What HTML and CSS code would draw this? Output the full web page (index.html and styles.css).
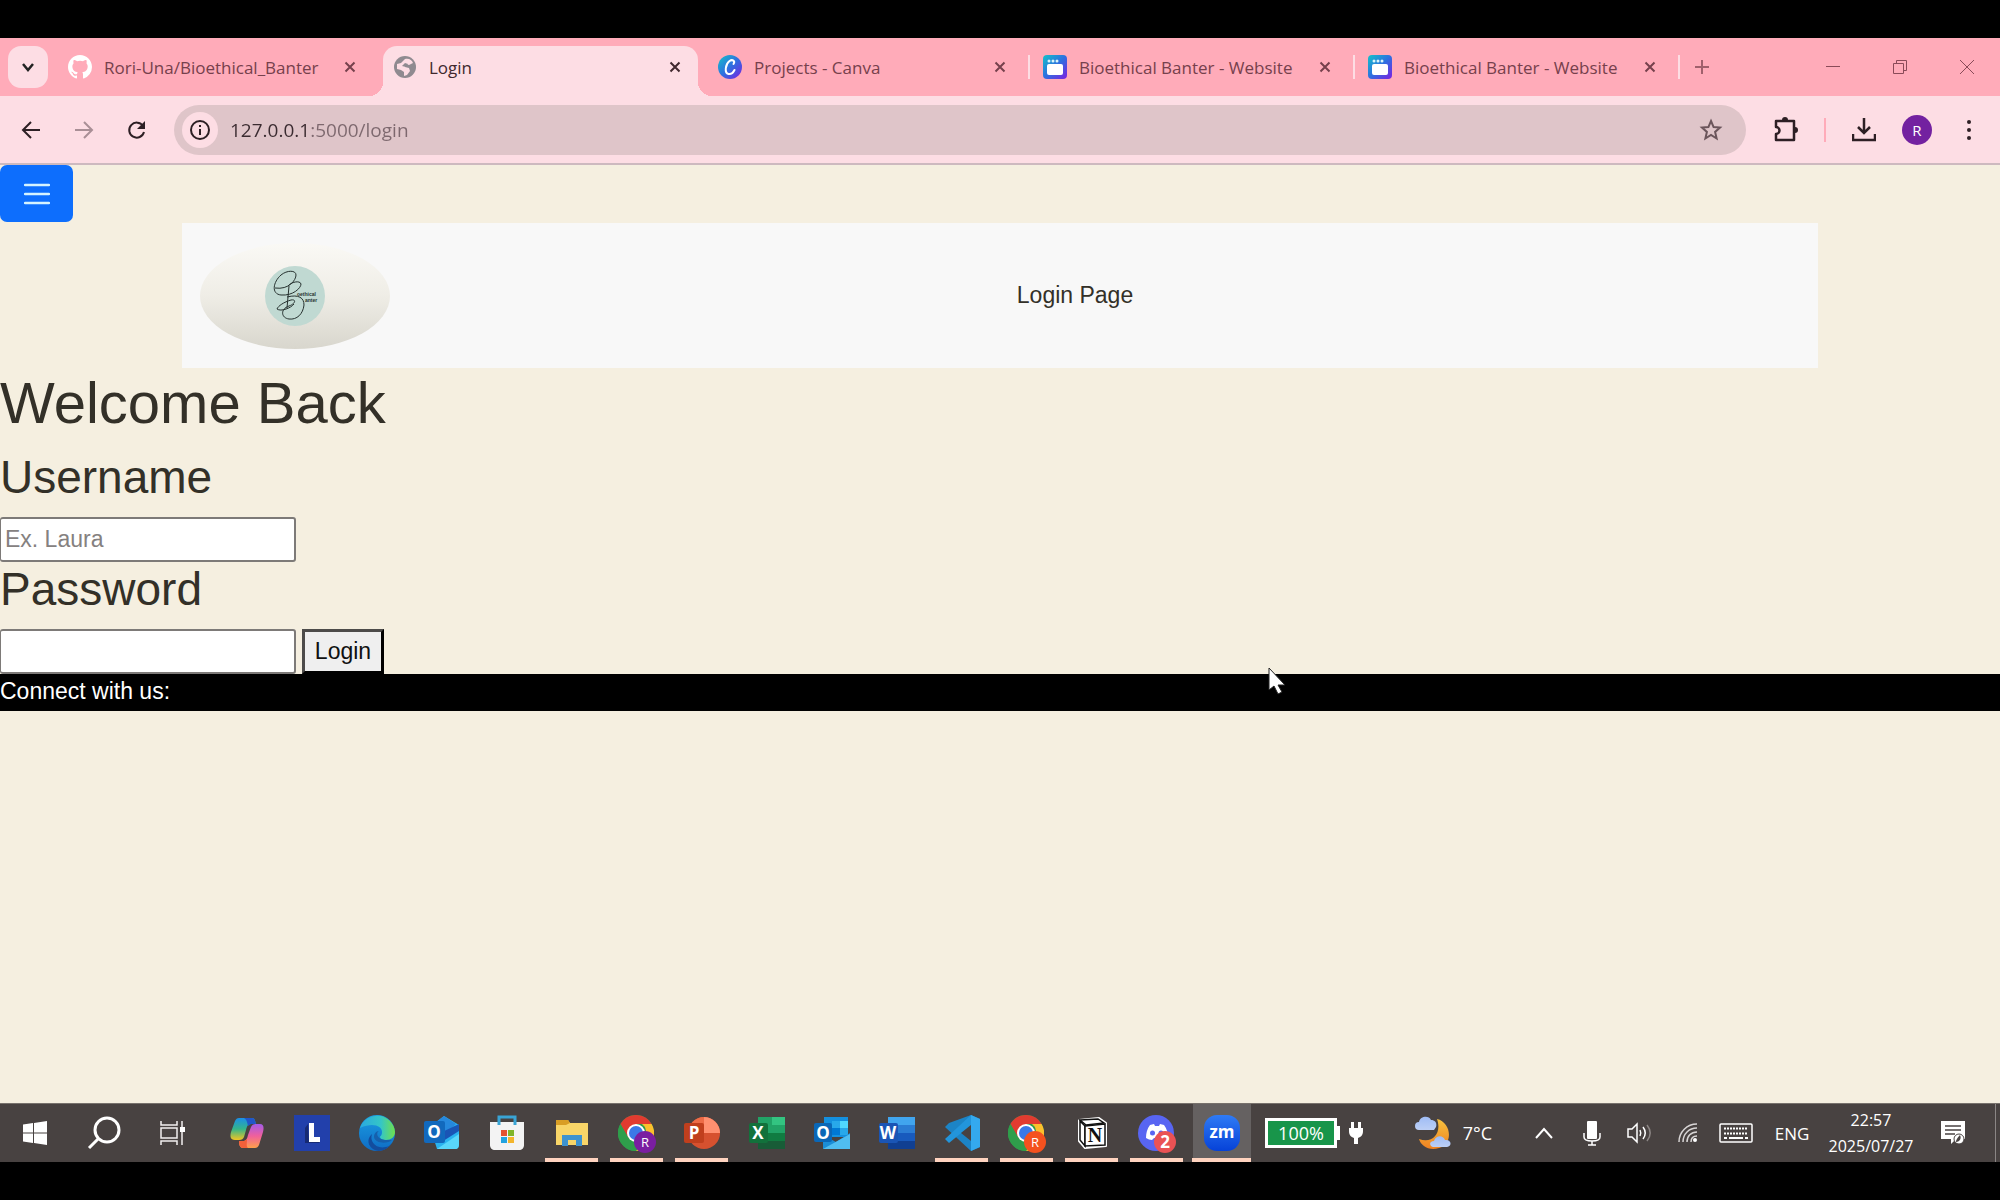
FILE: index.html
```html
<!DOCTYPE html>
<html lang="en">
<head>
  <meta charset="UTF-8" />
  <title>Login</title>
  <link rel="stylesheet" href="styles.css">
</head>
<body>
  <!-- shared shapes and gradients -->
  <svg class="defs" aria-hidden="true">
    <defs>
      <linearGradient id="canva" x1="0" y1="0" x2="1" y2="1"><stop offset="0" stop-color="#12c3c9"/><stop offset=".5" stop-color="#2f6fe0"/><stop offset="1" stop-color="#7d1fe0"/></linearGradient>
      <linearGradient id="copilotA" x1="0" y1="0" x2="0" y2="1"><stop offset="0" stop-color="#1b8fe8"/><stop offset=".5" stop-color="#34b58a"/><stop offset="1" stop-color="#f2c522"/></linearGradient>
      <linearGradient id="copilotB" x1="0" y1="0" x2="0" y2="1"><stop offset="0" stop-color="#a45be8"/><stop offset=".5" stop-color="#f0609c"/><stop offset="1" stop-color="#ffa04a"/></linearGradient>
      <linearGradient id="edgeA" x1="0" y1="0" x2="1" y2="0"><stop offset="0" stop-color="#2aa9e0"/><stop offset=".6" stop-color="#35c6c6"/><stop offset="1" stop-color="#6fe04c"/></linearGradient>
      <linearGradient id="edgeB" x1="0" y1="0" x2="0" y2="1"><stop offset="0" stop-color="#1b9de2"/><stop offset="1" stop-color="#0f6cc4"/></linearGradient>
      <linearGradient id="zoomBg" x1="0" y1="0" x2="0" y2="1"><stop offset="0" stop-color="#2f7bf5"/><stop offset="1" stop-color="#0642d8"/></linearGradient>
      <linearGradient id="moon" x1="0" y1="0" x2="0" y2="1"><stop offset="0" stop-color="#f7c23e"/><stop offset="1" stop-color="#ee8122"/></linearGradient>
      <linearGradient id="cloud" x1="0" y1="0" x2="0" y2="1"><stop offset="0" stop-color="#9fbcf5"/><stop offset="1" stop-color="#bccff5"/></linearGradient>
      <symbol id="x" viewBox="0 0 12 12"><path d="M1.500 1.500l9 9M10.500 1.500l-9 9" stroke="currentColor" stroke-width="2" fill="none"/></symbol>
      <symbol id="site" viewBox="0 0 24 24"><rect width="24" height="24" rx="4" fill="url(#canva)"/><circle cx="6" cy="6" r="1.500" fill="#d9f4fa"/><circle cx="10" cy="6" r="1.500" fill="#d9f4fa"/><circle cx="14" cy="6" r="1.500" fill="#d9f4fa"/><rect x="4" y="9" width="16" height="11" rx="2" fill="#fff"/></symbol>
      <symbol id="chrome" viewBox="0 0 36 36">
        <circle cx="18" cy="18" r="18" fill="#2f9e4b"/>
        <path d="M2.400 9A18 18 0 0 1 33.600 9H18a9 9 0 0 0-8 5z" fill="#e13b30"/>
        <path d="M33.600 9A18 18 0 0 1 18 36l8-14a9 9 0 0 0-2-13z" fill="#fbc02d"/>
        <path d="M2.400 9l7.800 13.500L18 18V9z" fill="#e13b30"/>
        <path d="M2.400 9A18 18 0 0 0 18 36l7-12H11z" fill="#2f9e4b"/>
        <circle cx="18" cy="18" r="9" fill="#fff"/><circle cx="18" cy="18" r="7" fill="#3b78e7"/>
      </symbol>
    </defs>
  </svg>

  <div class="tab-strip">
    <button class="tab-search" aria-label="Search tabs"><svg width="14" height="14" viewBox="0 0 14 14"><path d="M2 4l5 6 5-6" fill="none" stroke="currentColor" stroke-width="2.500"/></svg></button>
    <div class="tab">
      <svg class="tab-icon" viewBox="0 0 16 16"><path fill="#fff" d="M8 0C3.580 0 0 3.580 0 8c0 3.540 2.290 6.530 5.470 7.590.4.070.55-.17.55-.38 0-.19-.01-.82-.01-1.490-2.010.37-2.530-.49-2.690-.94-.09-.23-.48-.94-.82-1.130-.28-.15-.68-.52-.01-.53.63-.01 1.080.58 1.230.82.72 1.210 1.870.87 2.330.66.07-.52.28-.87.51-1.070-1.780-.2-3.640-.89-3.640-3.950 0-.87.31-1.590.82-2.150-.08-.2-.36-1.020.08-2.120 0 0 .67-.21 2.200.82a7.600 7.600 0 0 1 4 0c1.530-1.040 2.200-.82 2.200-.82.44 1.100.16 1.920.08 2.120.51.56.82 1.270.82 2.150 0 3.070-1.870 3.750-3.650 3.950.29.25.54.73.54 1.480 0 1.070-.01 1.930-.01 2.200 0 .21.15.46.55.38A8 8 0 0 0 16 8c0-4.420-3.580-8-8-8z"/></svg>
      <a class="tab-title" href="#">Rori-Una/Bioethical_Banter</a>
      <button class="tab-close" aria-label="Close tab"><svg width="12" height="12"><use href="#x"/></svg></button>
    </div>
    <div class="tab active">
      <svg class="tab-icon" viewBox="0 0 24 24"><circle cx="12" cy="12" r="11" fill="#8f8a90"/><path d="M12 4c4-1 7 1 8 4l-4 2-3-1-1 3 4 1 1 3-3 4-3 1v-4l-3-2-4-1V9l4-1 2-2z" fill="#fddde4"/><path d="M12 8l3 1-2 3-4-1z" fill="#8f8a90"/></svg>
      <a class="tab-title" href="#">Login</a>
      <button class="tab-close" aria-label="Close tab"><svg width="12" height="12"><use href="#x"/></svg></button>
    </div>
    <div class="tab">
      <svg class="tab-icon" viewBox="0 0 24 24"><circle cx="12" cy="12" r="12" fill="url(#canva)"/><path d="M15.500 9c2-3-1-5-4-3-4 3-5.500 12-1 13 3 .5 5-2 6-4" fill="none" stroke="#fff" stroke-width="2" stroke-linecap="round"/></svg>
      <a class="tab-title" href="#">Projects - Canva</a>
      <button class="tab-close" aria-label="Close tab"><svg width="12" height="12"><use href="#x"/></svg></button>
    </div>
    <div class="tab divided">
      <svg class="tab-icon"><use href="#site"/></svg>
      <a class="tab-title" href="#">Bioethical Banter - Website</a>
      <button class="tab-close" aria-label="Close tab"><svg width="12" height="12"><use href="#x"/></svg></button>
    </div>
    <div class="tab divided">
      <svg class="tab-icon"><use href="#site"/></svg>
      <a class="tab-title" href="#">Bioethical Banter - Website</a>
      <button class="tab-close" aria-label="Close tab"><svg width="12" height="12"><use href="#x"/></svg></button>
    </div>
    <div class="new-tab divided"><button aria-label="New tab"><svg width="16" height="16" viewBox="0 0 16 16"><path d="M8 1v14M1 8h14" stroke="currentColor" stroke-width="2"/></svg></button></div>
    <div class="window-buttons">
      <button aria-label="Minimize"><svg width="16" height="16" viewBox="0 0 16 16"><path d="M1 7.500h14" stroke="currentColor"/></svg></button>
      <button aria-label="Restore"><svg width="16" height="16" viewBox="0 0 16 16"><path d="M1.500 4.500h10v10h-10zM4.500 4V1.500h10v10H12" fill="none" stroke="currentColor"/></svg></button>
      <button aria-label="Close"><svg width="16" height="16" viewBox="0 0 16 16"><path d="M1 1l14 14M15 1L1 15" stroke="currentColor"/></svg></button>
    </div>
  </div>

  <div class="toolbar">
    <div class="nav-buttons">
      <button aria-label="Back"><svg width="20" height="20" viewBox="0 0 20 20"><path d="M19 10H3M10 2l-8 8 8 8" fill="none" stroke="currentColor" stroke-width="2"/></svg></button>
      <button class="disabled" aria-label="Forward"><svg width="20" height="20" viewBox="0 0 20 20"><path d="M1 10h16M10 2l8 8-8 8" fill="none" stroke="currentColor" stroke-width="2"/></svg></button>
      <button aria-label="Reload"><svg width="20" height="20" viewBox="0 0 20 20"><path d="M16 6A7.500 7.500 0 1 0 17 12" fill="none" stroke="currentColor" stroke-width="2"/><path d="M18 1v8h-8z" fill="currentColor"/></svg></button>
    </div>
    <div class="omnibox">
      <button class="site-info" aria-label="Site information"><svg width="20" height="20" viewBox="0 0 20 20"><circle cx="10" cy="10" r="9" fill="none" stroke="currentColor" stroke-width="2"/><path d="M10 9v6M10 5v2" stroke="currentColor" stroke-width="2"/></svg></button>
      <input class="address" type="text" value="127.0.0.1:5000/login" aria-label="Address">
      <button class="star" aria-label="Bookmark"><svg width="24" height="24" viewBox="0 0 24 24"><path d="M12 3l2.600 6.100 6.400.5-4.900 4.300 1.500 6.600L12 17l-5.600 3.500 1.500-6.600L3 9.600l6.400-.5z" fill="none" stroke="currentColor" stroke-width="2"/></svg></button>
    </div>
    <div class="actions">
      <button aria-label="Extensions"><svg width="26" height="26" viewBox="0 0 26 26"><path d="M3 4h18v19H3v-6a3.500 3.500 0 0 0 0-7z" fill="none" stroke="currentColor" stroke-width="2.500" stroke-linejoin="round"/><path d="M9 3a3 3 0 0 1 6 0zM22 10a3 3 0 0 1 0 6z" fill="currentColor"/></svg></button>
      <span class="bar"></span>
      <button aria-label="Downloads"><svg width="24" height="26" viewBox="0 0 24 26"><path d="M12 1v14M6 10l6 6 6-6M1 17v6h22v-6" fill="none" stroke="currentColor" stroke-width="2.500"/></svg></button>
      <button class="avatar" aria-label="Profile">R</button>
      <button class="dots" aria-label="Menu"><svg width="6" height="22" viewBox="0 0 6 22"><g fill="currentColor"><circle cx="3" cy="3" r="2"/><circle cx="3" cy="11" r="2"/><circle cx="3" cy="19" r="2"/></g></svg></button>
    </div>
  </div>

  <main class="page">
    <button class="menu-button" aria-label="Menu"><svg width="26" height="26" viewBox="0 0 26 26"><path d="M1 4h24M1 13h24M1 22h24" stroke="currentColor" stroke-width="2.500" stroke-linecap="round"/></svg></button>
    <header class="header">
      <div class="logo">
        <svg width="60" height="60" viewBox="0 0 60 60">
          <circle cx="30" cy="30" r="30" fill="#c0d9d2"/>
          <path d="M10 22C24 24 31 14 31 9C31 4 22 4 16 9C8 16 6 28 16 29C28 30 36 22 36 18C35 14 26 16 23 20M24 20L22 42M22 31C34 28 39 32 39 39C38 48 32 54 24 53C16 52 15 43 24 40C30 38 32 33 26 34C19 36 13 40 12 43C16 46 26 42 29 38" fill="none" stroke="#26312f" stroke-width="1"/>
          <text x="32" y="30" class="logo-text">oethical</text>
          <text x="40" y="36" class="logo-text">anter</text>
        </svg>
      </div>
      <p class="page-name">Login Page</p>
    </header>
    <form class="login-form">
      <h1>Welcome Back</h1>
      <h2><label for="username">Username</label></h2>
      <input type="text" id="username" placeholder="Ex. Laura">
      <h2><label for="password">Password</label></h2>
      <div class="row">
        <input type="password" id="password">
        <button type="button">Login</button>
      </div>
    </form>
    <footer class="footer">Connect with us:
      <svg class="cursor" width="20" height="30" viewBox="0 0 20 30"><path d="M1 1v22l5-4 4 8 4-2-4-7h7z" fill="#fff" stroke="#222" stroke-width="1"/></svg>
    </footer>
  </main>

  <div class="taskbar">
    <div class="system">
      <button aria-label="Start"><svg width="24" height="24" viewBox="0 0 24 24" fill="#fff"><path d="M0 3.500l10-1.500v9.500H0zM11 2l13-2v11.500H11zM0 12.500h10V22L0 20.500zM11 12.500h13V24l-13-2z"/></svg></button>
      <button aria-label="Search"><svg width="34" height="34" viewBox="0 0 34 34"><circle cx="20" cy="14" r="12" fill="none" stroke="#fff" stroke-width="3"/><path d="M12 22L2 32" stroke="#fff" stroke-width="3"/></svg></button>
      <button aria-label="Task view"><svg width="26" height="24" viewBox="0 0 26 24" fill="none" stroke="#f2f0f0" stroke-width="1.500"><path d="M1 0v4h16V0M1 7h16v10H1zM1 24v-4h16v4M22 0v24"/><path d="M20 6h5v5h-5z" fill="#fff" stroke="none"/></svg></button>
    </div>
    <div class="apps">
      <button aria-label="Copilot"><svg width="36" height="36" viewBox="0 0 36 36"><path d="M10 3h13c3 0 3 3 4 6h-5c-3 0-4 2-5 6l-2 7c-1 2-2 3-5 3H6c-5 0-5-4-4-8l4-11c1-2 2-3 4-3z" fill="url(#copilotA)"/><path d="M15 3h8c3 0 3 3 4 6h-5l-3 2c-1-4-1-6-4-8z" fill="#2156c9"/><path d="M26 33H14c-3 0-4-3-4-7h4c3 0 4-2 5-6l3-8c1-2 2-3 5-3h4c4 0 4 4 3 8l-4 13c-1 2-2 3-4 3z" fill="url(#copilotB)"/><path d="M10 26h5l3-2c0 5-1 7 1 9h-5c-3 0-4-3-4-7z" fill="#f2603a"/></svg></button>
      <button aria-label="L"><svg width="36" height="36" viewBox="0 0 36 36"><rect width="36" height="36" fill="#2240ab"/><path d="M15 8v19h11v-5h-6V8z" fill="#fff"/><path d="M14 9l-3 4v15h14l1-1H15z" fill="#172a72"/></svg></button>
      <button aria-label="Edge"><svg width="36" height="36" viewBox="0 0 36 36"><circle cx="18" cy="18" r="18" fill="url(#edgeB)"/><path d="M1 13A18 18 0 0 1 36 17c0 5-4 8-9 8-4 0-6-1-6-3 0-1 2-1 2-5 0-6-9-10-22-4z" fill="url(#edgeA)"/><path d="M13 19c-3 8 5 17 17 12l3-3a18 18 0 0 1-13 8c-10-1-14-11-7-17z" fill="#134d9e"/><path d="M20 16c-3 1-3 8 6 9h7c-4 4-17 4-18-3 0-3 2-6 5-6z" fill="#1660ad"/></svg></button>
      <button aria-label="Outlook"><svg width="36" height="36" viewBox="0 0 36 36"><path d="M6 12L20 1l15 9v19c0 3-1 5-4 5H13z" fill="#2ab3ef"/><path d="M12 7l8-6 12 8-12 11z" fill="#2688dd"/><path d="M16 18l19-9v7L16 28z" fill="#1a55b5"/><path d="M13 34l22-15v10c0 3-1 5-4 5z" fill="#59d7fa"/><rect y="6" width="21" height="22" rx="2" fill="#1269bd"/><text x="10" y="23" class="badge-letter">O</text></svg></button>
      <button aria-label="Store"><svg width="36" height="36" viewBox="0 0 36 36"><path d="M10 10V2h16v8" fill="none" stroke="#39a4d5" stroke-width="3"/><path d="M1 7h34v23c0 3-2 5-5 5H6c-3 0-5-2-5-5z" fill="#f3f3f3"/><path d="M10 10V7M26 10V7" stroke="#39a4d5" stroke-width="3"/><path d="M12 15h6v6h-6z" fill="#e4512f"/><path d="M19 15h6v6h-6z" fill="#7fb52a"/><path d="M12 22h6v6h-6z" fill="#22a3df"/><path d="M19 22h6v6h-6z" fill="#f3b52c"/></svg></button>
      <button class="open" aria-label="File Explorer"><svg width="36" height="36" viewBox="0 0 36 36"><path d="M2 5h12l2 3h18v22H2z" fill="#f8d568"/><path d="M2 5h12l2 3-4 2H2z" fill="#d99e25"/><path d="M8 20h20v11h-6v-6h-8v6H8z" fill="#3e93cf"/></svg></button>
      <button class="open" aria-label="Chrome"><svg width="40" height="40" viewBox="0 0 40 40"><use href="#chrome" x="1" y="2" width="36" height="36"/><circle cx="28" cy="29" r="11" fill="#7a1ea1"/><text x="28" y="34" class="badge-small">R</text></svg></button>
      <button class="open" aria-label="PowerPoint"><svg width="36" height="36" viewBox="0 0 36 36"><circle cx="20" cy="18" r="16" fill="#d6512f"/><path d="M20 2a16 16 0 0 1 16 16H20z" fill="#ff9070"/><path d="M20 2A16 16 0 0 0 4 18h16z" fill="#ed6c47"/><rect y="8" width="20" height="20" rx="2" fill="#c03f1d"/><text x="10" y="24" class="badge-letter">P</text></svg></button>
      <button aria-label="Excel"><svg width="36" height="36" viewBox="0 0 36 36"><path d="M9 2h27v32H9z" fill="#185c37"/><path d="M9 2h14v16H9z" fill="#21a366"/><path d="M23 2h13v8H23z" fill="#33c481"/><path d="M23 10h13v8H23z" fill="#21a366"/><path d="M9 18h27v8H9z" fill="#107c41"/><rect y="8" width="19" height="20" rx="2" fill="#12713b"/><text x="9" y="24" class="badge-letter">X</text></svg></button>
      <button aria-label="Outlook classic"><svg width="36" height="36" viewBox="0 0 36 36"><path d="M10 2h24v20H10z" fill="#1490df"/><path d="M18 6h8v7h-8z" fill="#28a8ea"/><path d="M26 6h8v7h-8z" fill="#50d9ff"/><path d="M18 13h8v7h-8z" fill="#0078d4"/><path d="M26 13h8v7h-8z" fill="#28a8ea"/><path d="M9 20l13 7 14-9v16H9z" fill="#1b8dd6"/><path d="M9 34l27-15v15z" fill="#50bdf0"/><rect y="8" width="18" height="19" rx="2" fill="#0a67b7"/><text x="9" y="24" class="badge-letter">O</text></svg></button>
      <button aria-label="Word"><svg width="36" height="36" viewBox="0 0 36 36"><path d="M9 2h27v8H9z" fill="#41a5ee"/><path d="M9 10h27v8H9z" fill="#2b7cd3"/><path d="M9 18h27v8H9z" fill="#185abd"/><path d="M9 26h27v8H9z" fill="#103f91"/><rect y="8" width="19" height="20" rx="2" fill="#1a55b5"/><text x="9" y="24" class="badge-letter">W</text></svg></button>
      <button class="open" aria-label="Visual Studio Code"><svg width="36" height="36" viewBox="0 0 36 36"><path d="M27 0l9 4v28l-9 4L1 12l4-4z" fill="#1c84c6"/><path d="M27 0v10L5 28l-4-4z" fill="#2295dc"/><path d="M27 10v16l-10-8z" fill="#484241"/><path d="M27 0l9 4v28l-9 4z" fill="#34a9ee"/></svg></button>
      <button class="open" aria-label="Chrome profile"><svg width="40" height="40" viewBox="0 0 40 40"><use href="#chrome" x="1" y="2" width="36" height="36"/><circle cx="28" cy="29" r="11" fill="#f4511e"/><text x="28" y="34" class="badge-small">R</text></svg></button>
      <button class="open" aria-label="Notion"><svg width="30" height="32" viewBox="0 0 30 32"><path d="M2 3l20-2 7 5v23l-21 2-6-7z" fill="#fff" stroke="#fff" stroke-width="2" stroke-linejoin="round"/><path d="M3 3l18-1 6 4-18 2z" fill="#fff" stroke="#111" stroke-width="1.500"/><path d="M3 4l5 5v20l-5-6z" fill="#fff" stroke="#111" stroke-width="1.500"/><path d="M8 9l20-2v21L8 29z" fill="#fff" stroke="#111" stroke-width="1.500"/><text x="18" y="25" class="notion-letter">N</text></svg></button>
      <button class="open" aria-label="Discord"><svg width="40" height="40" viewBox="0 0 40 40"><circle cx="19" cy="20" r="18" fill="#5865f2"/><path d="M13 12l4-1 1 2h4l1-2 4 1c3 4 4 8 4 13-2 2-4 2-5 2l-1-2h-8l-2 2c-2 0-4-1-6-2 0-5 1-9 4-13z" fill="#fff"/><circle cx="15.500" cy="20" r="2.500" fill="#5865f2"/><circle cx="24" cy="20" r="2.500" fill="#5865f2"/><circle cx="28" cy="29" r="11" fill="#ea5254"/><text x="28" y="35" class="badge-letter">2</text></svg></button>
      <button class="open current" aria-label="Zoom"><svg width="36" height="36" viewBox="0 0 36 36"><rect width="36" height="36" rx="13" fill="url(#zoomBg)"/><text x="18" y="23" class="zoom-letters">zm</text></svg></button>
    </div>
    <div class="battery">
      <span class="charge">100%</span><span class="nub"></span>
      <svg width="16" height="24" viewBox="0 0 16 24" fill="#fff"><path d="M3 1h3v6h4V1h3v6h2v3c0 4-2 6-5 7v6H6v-6c-3-1-5-3-5-7V7h2z"/></svg>
    </div>
    <div class="tray">
      <button class="weather"><svg width="36" height="34" viewBox="0 0 36 34"><path d="M22 3c14 3 17 25 2 29-10 3-18-2-20-9 14 5 23-6 18-20z" fill="url(#moon)"/><path d="M4 14a4 4 0 0 1 0-8c1-6 10-7 12-2 5 0 6 4 5 7l-2 3z" fill="url(#cloud)"/><path d="M18 31c-4-1-4-6 1-6 2-6 9-6 11-1 7-1 7 7 2 7z" fill="url(#cloud)"/></svg>7°C</button>
      <button class="cell" aria-label="Show hidden icons"><svg width="18" height="12" viewBox="0 0 18 12"><path d="M1 11l8-9 8 9" fill="none" stroke="#fff" stroke-width="2"/></svg></button>
      <button class="cell" aria-label="Microphone"><svg width="18" height="26" viewBox="0 0 18 26"><rect x="4" y="1" width="10" height="18" rx="1" fill="#fff"/><path d="M1 13v4c0 3 3 4 8 4s8-1 8-4v-4M9 21v4M5 25h8" fill="none" stroke="#fff" stroke-width="1.500"/></svg></button>
      <button class="cell" aria-label="Volume"><svg width="26" height="22" viewBox="0 0 26 22" fill="none" stroke="#fff" stroke-width="1.500"><path d="M1 7h4l5-5v18l-5-5H1z"/><path d="M13 8c1 2 1 4 0 6M16 5c3 4 3 8 0 12"/><path d="M20 3c4 5 4 11 0 16" stroke="#8c8685"/></svg></button>
      <button class="cell" aria-label="Network"><svg width="20" height="20" viewBox="0 0 20 20" fill="none" stroke="#d8d5d5" stroke-width="1.500"><path d="M1 19C1 9 9 1 19 1M5 19C5 11 11 5 19 5M9 19c0-6 4-10 10-10M13 19c0-4 2-6 6-6"/><circle cx="17" cy="17" r="2" fill="#fff" stroke="none"/></svg></button>
      <button class="cell" aria-label="Touch keyboard"><svg width="34" height="20" viewBox="0 0 34 20" fill="none" stroke="#fff"><rect x="1" y="1" width="32" height="18" rx="1" stroke-width="1.500"/><path d="M5 5.500h24M5 10.500h24" stroke-width="2" stroke-dasharray="2 1"/><path d="M5 15h3M10 15h14M26 15h3" stroke-width="2"/></svg></button>
      <button class="cell lang">ENG</button>
      <button class="clock"><span>22:57</span><span>2025/07/27</span></button>
      <button class="cell notify" aria-label="Notifications"><svg width="24" height="24" viewBox="0 0 24 24"><path d="M0 0h24v18h-9l-5 5v-5H0z" fill="#fff"/><path d="M4 5h16M4 9h16M4 13h10" stroke="#484241" stroke-width="1.500"/><circle cx="18" cy="18" r="5" fill="#fff" stroke="#484241"/><path d="M19 14c-4 4-4 6-4 7 3 0 6-3 4-7z" fill="#484241"/></svg></button>
      <button class="show-desktop" aria-label="Show desktop"></button>
    </div>
  </div>
</body>
</html>
```

FILE: styles.css
```css
* { box-sizing: border-box; }
body { margin: 0; padding: 38px 0; min-height: 100vh; display: flex; flex-direction: column; background: #000; font-family: "Open Sans", "Noto Sans", sans-serif; color: #333028; }
button { padding: 0; border: none; background: none; font: inherit; color: inherit; display: flex; align-items: center; justify-content: center; }
svg { display: block; flex: none; }
.defs { position: absolute; width: 0; height: 0; }

/* tabs */
.tab-strip { display: flex; align-items: flex-end; height: 58px; padding-left: 8px; background: #ffabb9; color: #76404c; font-size: 17px; }
.tab-search { width: 40px; height: 42px; margin: 0 5px 8px 0; border-radius: 13px; background: #fddde4; color: #222; }
.tab { position: relative; display: flex; align-items: center; flex: 0 1 325px; height: 50px; padding: 0 22px 8px 15px; min-width: 0; }
.tab-icon { width: 24px; height: 24px; margin-right: 12px; }
.tab-title { flex: 1; color: inherit; text-decoration: none; white-space: nowrap; overflow: hidden; }
.tab.active { background: #fddde4; color: #40282e; border-radius: 14px 14px 0 0; margin: 0 5px; flex-basis: 315px; padding: 0 17px 8px 10px; }
.tab.active::before, .tab.active::after { content: ""; position: absolute; bottom: 0; width: 14px; height: 14px; }
.tab.active::before { right: 100%; background: radial-gradient(circle at 0 0, transparent 14px, #fddde4 14px); }
.tab.active::after { left: 100%; background: radial-gradient(circle at 100% 0, transparent 14px, #fddde4 14px); }
.divided::before { content: ""; position: absolute; left: 0; top: 9px; width: 2px; height: 24px; background: #fddde4; }
.new-tab { position: relative; display: flex; align-items: center; height: 50px; padding: 0 16px 8px; color: #a0606c; }
.window-buttons { display: flex; margin-left: auto; height: 50px; padding-bottom: 8px; color: #8a4a58; }
.window-buttons button { width: 67px; }

/* toolbar */
.toolbar { display: flex; align-items: center; height: 69px; padding: 0 28px 0 21px; background: #fddde4; border-bottom: 2px solid #cdb9bf; color: #2d1f24; }
.nav-buttons { display: flex; gap: 33px; width: 153px; }
.nav-buttons .disabled { color: #a98f96; }
.omnibox { display: flex; align-items: center; flex: 1; height: 50px; padding: 0 23px 0 8px; border-radius: 25px; background: #dfc5c9; }
.site-info { width: 36px; height: 36px; border-radius: 50%; background: #fddde4; }
/* host is darker than the port and path */
.address { flex: 1; margin-left: 12px; padding: 0; border: none; outline: none; font: 19px "Open Sans", sans-serif; background: linear-gradient(90deg, #3a2b30 81px, #7d686e 81px); -webkit-background-clip: text; background-clip: text; color: transparent; }
.star { color: #6b555b; }
.actions { display: flex; align-items: center; padding-left: 27px; }
.bar { width: 2px; height: 24px; margin: 0 26px 0 25px; background: #ffabb9; }
.avatar { width: 30px; height: 30px; margin: 0 34px 0 26px; border-radius: 50%; background: #7321a0; color: #fff; font-size: 15px; }

/* page */
.page { flex: 1; background: #f5efe0; font-family: "Liberation Sans", Arial, sans-serif; font-size: 23px; }
.menu-button { width: 73px; height: 57px; border-radius: 7px; background: #0d6efd; color: #d5f3ff; }
.header { display: flex; align-items: center; width: 82%; max-width: calc(100% - 364px); height: 145px; margin: 1px auto 0; padding: 0 18px; background: #f8f8f8; }
.logo { display: flex; align-items: center; justify-content: center; width: 190px; height: 106px; border-radius: 50%; background: linear-gradient(#faf9f5, #efede6 50%, #d8d6cd); }
.logo-text { font-size: 5px; font-weight: bold; fill: #26312f; }
.page-name { flex: 1; margin: 0; padding-right: 40px; text-align: center; }
.login-form h1 { margin: 0 0 12px; font-size: 58px; line-height: 70px; font-weight: normal; }
.login-form h2 { margin: 0; padding-bottom: 13px; font-size: 46px; line-height: 54px; font-weight: normal; }
.login-form input { display: block; width: 296px; height: 45px; padding: 0 4px; border: 2px solid #7d7a78; border-left-width: 1px; border-radius: 3px; background: #fff; font: inherit; }
.login-form input::placeholder { color: #85817f; }
.row { display: flex; gap: 6px; }
.row button { width: 82px; border: 3px outset #1a1a1a; border-color: #4d4b4a #000 #000 #4d4b4a; background: #efefef; color: #111; }
.footer { position: relative; height: 37px; line-height: 34px; background: #000; color: #fff; }
.cursor { position: absolute; left: 63.400%; top: -7px; }

/* taskbar */
.taskbar { display: flex; height: 59px; background: #484241; border-top: 1px solid #77716c; color: #fff; font-size: 18px; }
.system { display: flex; margin-right: 7px; }
.system button { width: 69px; }
.apps { display: flex; }
.apps button { position: relative; width: 65px; }
.apps .open::after { content: ""; position: absolute; left: 6px; right: 6px; bottom: 0; height: 4px; background: #ffd3bf; }
.apps .current { background: linear-gradient(#656161, #656161) center / 58px 100% no-repeat; }
.apps .current::after { left: 3px; right: 3px; }
.badge-letter { font-size: 17px; font-weight: bold; fill: #fff; text-anchor: middle; }
.badge-small { font-size: 13px; fill: #fff; text-anchor: middle; }
.notion-letter { font: bold 20px "Liberation Serif", serif; fill: #111; text-anchor: middle; }
.zoom-letters { font-size: 17px; font-weight: bold; fill: #fff; text-anchor: middle; }
.battery { display: flex; align-items: center; margin-left: 11px; }
.charge { width: 72px; height: 30px; border: 3px solid #fff; background: #18954a; line-height: 24px; text-align: center; }
.nub { width: 3px; height: 14px; margin-right: 8px; background: #fff; }
.tray { display: flex; margin-left: auto; }
.weather { gap: 12px; margin-right: 28px; }
.cell { width: 48px; }
.lang { width: 64px; font-size: 17px; }
.clock { flex-direction: column; width: 94px; font-size: 16px; line-height: 26px; }
.notify { width: 70px; margin-right: 7px; }
.show-desktop { width: 5px; border-left: 1px solid #8b8685; }
```
